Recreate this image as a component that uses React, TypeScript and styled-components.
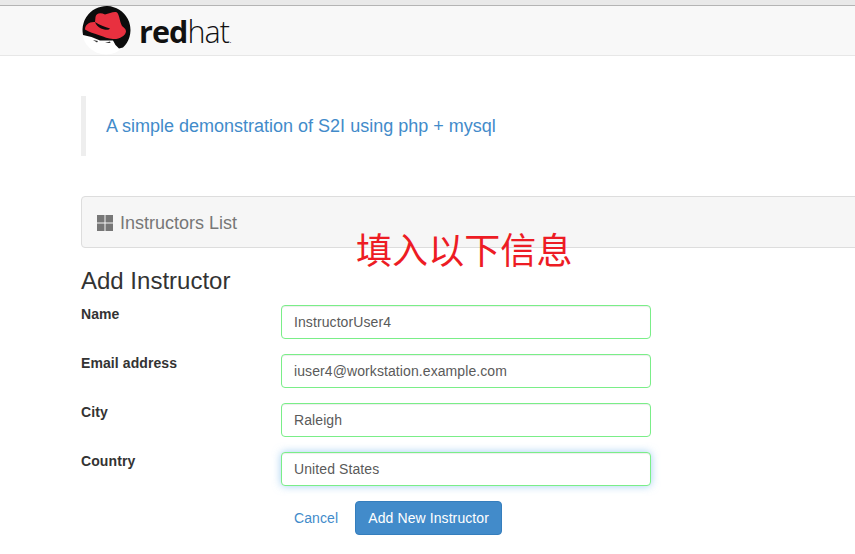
import { createGlobalStyle, styled } from 'styled-components';

const GlobalStyle = createGlobalStyle`
  html, body {
    margin: 0;
    height: 100%;
    background: #fff;
    overflow: hidden;
  }
  body {
    font-family: "Liberation Sans", Arial, sans-serif;
    font-size: 14px;
    line-height: 20px;
    letter-spacing: 0.09px;
    color: #333;
  }
`;

const Page = styled.div`
  position: relative;
  width: 855px;
  height: 554px;
  overflow: hidden;
`;

const TopStrip = styled.div`
  height: 5px;
  background: #e9e9e9;
  border-bottom: 1px solid #b4b4b4;
`;

const Navbar = styled.nav`
  height: 49px;
  background: #f8f8f8;
  border-bottom: 1px solid #e7e7e7;
  padding-left: 81px;
  display: flex;
  align-items: center;
  gap: 8px;
`;

const Wordmark = styled.span`
  font-family: "Open Sans", sans-serif;
  font-size: 30.5px;
  line-height: 40px;
  letter-spacing: -0.9px;
  color: #111;
  font-weight: 700;
  margin-top: 8px;
  > span {
    font-weight: 300;
  }
  > small {
    font-size: 10px;
    font-weight: 300;
    letter-spacing: 0;
  }
`;

const Content = styled.main`
  width: 900px;
  padding: 40px 0 0 81px;
`;

const Quote = styled.blockquote`
  margin: 0 0 40px;
  height: 60px;
  width: 570px;
  box-sizing: border-box;
  border-left: 5px solid #eee;
  padding-left: 20px;
  display: flex;
  align-items: center;
  font-size: 18px;
  letter-spacing: 0;
  color: #428bca;
`;

const PanelHeading = styled.div`
  height: 52px;
  box-sizing: border-box;
  border: 1px solid #ddd;
  border-radius: 4px;
  background: #f6f6f6;
  padding: 1px 0 0 15px;
  display: flex;
  align-items: center;
  gap: 7px;
  font-size: 18px;
  letter-spacing: 0;
  color: #777;
`;

const FormTitle = styled.h3`
  margin: 20px 0 11px;
  font-size: 24px;
  line-height: 26px;
  font-weight: 400;
  letter-spacing: 0;
  color: #333;
`;

const Form = styled.form`
  display: flex;
  flex-direction: column;
  gap: 15px;
`;

const Row = styled.div`
  display: flex;
  align-items: flex-start;
`;

const Label = styled.label`
  width: 200px;
  font-weight: 700;
  line-height: 18px;
`;

const Field = styled.div<{ $focused?: boolean }>`
  width: 370px;
  height: 34px;
  box-sizing: border-box;
  border: 1px solid #7aee88;
  border-radius: 4px;
  background: #fff;
  padding: 0 12px;
  display: flex;
  align-items: center;
  color: #5a5a5a;
  box-shadow: ${(p) =>
    p.$focused
      ? 'inset 0 1px 1px rgba(0,0,0,.075), 0 0 8px rgba(102,175,233,.6)'
      : 'inset 0 1px 1px rgba(0,0,0,.075)'};
`;

const Actions = styled.div`
  display: flex;
  align-items: center;
  padding-left: 213px;
  gap: 17px;
`;

const CancelLink = styled.a`
  color: #428bca;
`;

const SubmitButton = styled.button`
  height: 34px;
  width: 147px;
  padding: 0;
  border: 1px solid #357ebd;
  border-radius: 4px;
  background: #428bca;
  color: #fff;
  font: inherit;
  letter-spacing: inherit;
`;

const Annotation = styled.div`
  position: absolute;
  left: 356px;
  top: 226px;
  font-family: "Noto Sans CJK SC", sans-serif;
  font-size: 36px;
  line-height: 44px;
  color: #ed1c24;
`;

const fields = [
  { label: 'Name', value: 'InstructorUser4' },
  { label: 'Email address', value: 'iuser4@workstation.example.com' },
  { label: 'City', value: 'Raleigh' },
  { label: 'Country', value: 'United States', focused: true },
];

const HatLogo = () => (
  <svg width="50" height="50" viewBox="0 0 50 50" aria-hidden="true">
    <circle cx="25" cy="24.500" r="24" fill="#fff" />
    <path d="M2 29A24 24 0 1 1 42 41.500L38 42.500 34.500 39 32 34.500 19 34.500 10.500 31z" fill="#0c0c0c" />
    <path d="M14.500 11C15 7.500 19 6 24 8.500 28 8 33 5 36 6.500 38.500 9 38.500 15 41 20 43 22 45 23 45 25.500 44.500 30 38 33.500 32 33 27 32.500 23 31 19 29.500 13 27.500 8 26 4 23.500 4 19 8 15.500 14 16z" fill="#e8303f" />
    <path d="M14 16C18 19 24 21 29 22.500 28 24.500 24 24 20 22.500 17 21 15 19 14 16z" fill="#0c0c0c" />
    <path d="M12 34l5 1-1 1.500zM24 37l5-1.500.5 1.500z" fill="#333" />
  </svg>
);

const GridIcon = () => (
  <svg width="16" height="16" viewBox="0 0 16 16" aria-hidden="true">
    <path d="M0 0h7.500v7.500H0zM8.500 0H16v7.500H8.500zM0 8.500h7.500V16H0zM8.500 8.500H16V16H8.500z" fill="#777" />
  </svg>
);

const App = () => {
  return (
    <Page>
      <GlobalStyle />
      <TopStrip />
      <Navbar>
        <HatLogo />
        <Wordmark>
          red<span>hat</span>
          <small>.</small>
        </Wordmark>
      </Navbar>
      <Content>
        <Quote>A simple demonstration of S2I using php + mysql</Quote>
        <PanelHeading>
          <GridIcon />
          Instructors List
        </PanelHeading>
        <FormTitle>Add Instructor</FormTitle>
        <Form>
          {fields.map((f) => (
            <Row key={f.label}>
              <Label>{f.label}</Label>
              <Field $focused={f.focused}>{f.value}</Field>
            </Row>
          ))}
          <Actions>
            <CancelLink>Cancel</CancelLink>
            <SubmitButton type="button">Add New Instructor</SubmitButton>
          </Actions>
        </Form>
      </Content>
      <Annotation>填入以下信息</Annotation>
    </Page>
  );
};

export default App;
